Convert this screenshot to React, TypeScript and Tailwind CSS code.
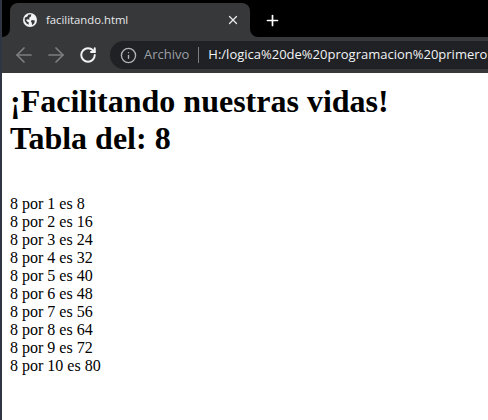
import { ArrowLeft, ArrowRight, RotateCw, X, Plus, Info } from "lucide-react";

const rows = [1, 2, 3, 4, 5, 6, 7, 8, 9, 10];

const Globe = () => (
  <svg width="14" height="14" viewBox="0 0 16 16" className="shrink-0">
    <circle cx="8" cy="8" r="8" fill="#f1f3f4" />
    <path
      d="M2 5.5 L5 4 L6 2 L9.5 1.5 L9 4 L7 5.5 L7.5 7.5 L5 7 L3.5 8 L5 10 L6.5 10.5 L6.5 13.5 L4 12 L2 9 Z"
      fill="#37383a"
    />
    <path d="M10 8 L13.5 8.5 L13 11.5 L10.5 14 L10 11 L9 9.5 Z" fill="#37383a" />
  </svg>
);

export default function App() {
  return (
    <div className="flex h-[420px] w-[488px] overflow-hidden bg-white font-['Liberation_Serif',serif]">
      <div className="w-[2px] shrink-0 bg-[#2f3542]" />
      <div className="min-w-0 flex-1">
        <div className="font-['Open_Sans','Noto_Sans',sans-serif]">
          <div className="flex h-[37px] items-end bg-black pl-[8px]">
            <div className="relative flex h-[34px] w-[240px] items-center rounded-t-[8px] bg-[#37383a] pl-[13px] pr-[10px]">
              <div className="absolute bottom-0 left-[-8px] h-[8px] w-[8px] bg-[#37383a]">
                <div className="h-full w-full rounded-br-[8px] bg-black" />
              </div>
              <Globe />
              <span className="ml-[9px] flex-1 text-[11.3px] text-[#e8eaed]">facilitando.html</span>
              <X size={14} strokeWidth={2.2} color="#e8eaed" className="shrink-0" />
              <div className="absolute bottom-0 right-[-8px] h-[8px] w-[8px] bg-[#37383a]">
                <div className="h-full w-full rounded-bl-[8px] bg-black" />
              </div>
            </div>
            <div className="mb-[8px] ml-[14px] flex">
              <Plus size={17} strokeWidth={2.4} color="#ffffff" />
            </div>
          </div>
          <div className="flex h-[36px] items-center bg-[#37383a] pl-[10px]">
            <ArrowLeft size={24} strokeWidth={1.7} color="#7d7e80" className="shrink-0" />
            <ArrowRight size={24} strokeWidth={1.7} color="#7d7e80" className="ml-[8px] shrink-0" />
            <RotateCw size={18} strokeWidth={2.6} color="#f1f3f4" className="ml-[11px] shrink-0" />
            <div className="ml-[13px] flex h-[28px] min-w-0 flex-1 items-center overflow-hidden whitespace-nowrap rounded-l-[14px] bg-[#202124] pl-[10px]">
              <Info size={17} strokeWidth={1.9} color="#b0b2b5" className="shrink-0" />
              <span className="ml-[7px] text-[13px] text-[#9aa0a6]">Archivo</span>
              <span className="ml-[9px] h-[16px] w-px shrink-0 bg-[#7d7e80]" />
              <span className="ml-[9px] text-[13px] text-[#f1f3f4]">
                H:/logica%20de%20programacion%20primero
              </span>
            </div>
          </div>
        </div>
        <div className="pl-[8px] text-black">
          <h1 className="mt-[10px] text-[32px] font-bold leading-[37px]">¡Facilitando nuestras vidas!</h1>
          <h1 className="text-[32px] font-bold leading-[37px]">Tabla del: 8</h1>
          <div className="mt-[38px] text-[16px] leading-[18px]">
            {rows.map((n) => (
              <div key={n}>
                8 por {n} es {8 * n}
              </div>
            ))}
          </div>
        </div>
      </div>
    </div>
  );
}
